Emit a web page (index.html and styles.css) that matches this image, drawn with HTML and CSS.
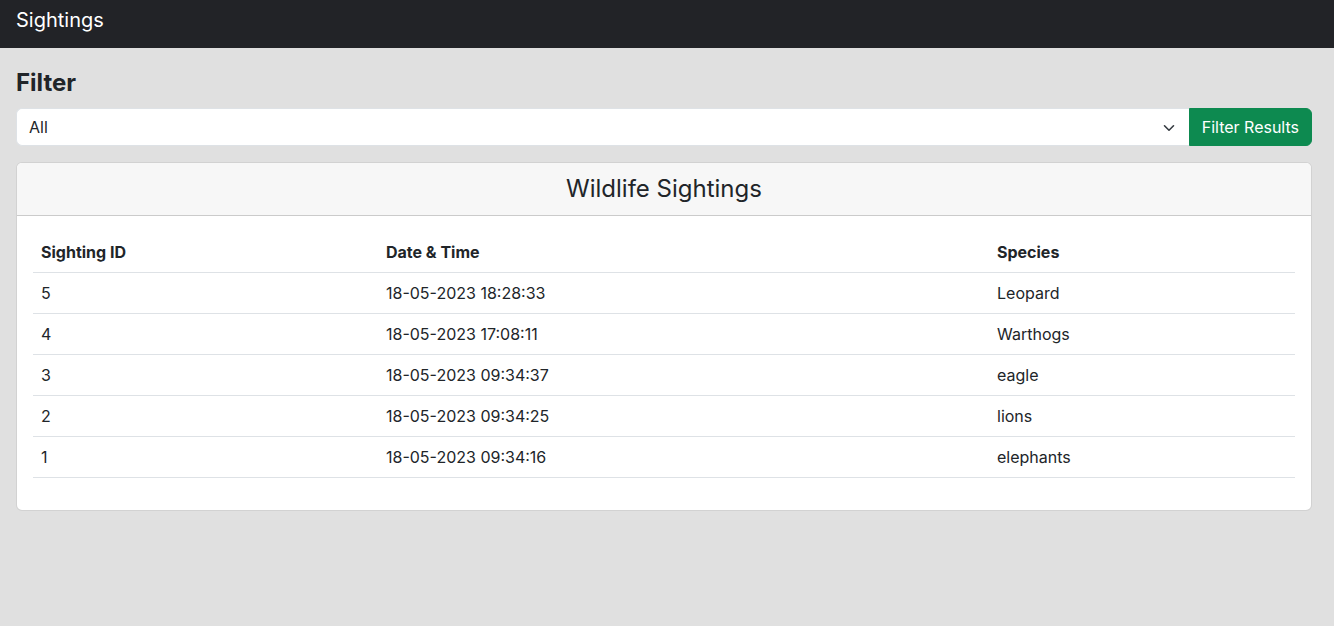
FILE: index.html
```html
<!DOCTYPE html>
<html lang="en">
<head>
<meta charset="utf-8">
<title>Sightings</title>
<link rel="stylesheet" href="styles.css">
</head>
<body>
<nav class="navbar"><span class="brand">Sightings</span></nav>
<main class="container">
  <h4 class="filter-title">Filter</h4>
  <div class="input-group">
    <div class="select">
      <span>All</span>
      <svg class="chevron" width="12" height="8" viewBox="0 0 12 8"><path fill="none" stroke="#343a40" stroke-linecap="round" stroke-linejoin="round" stroke-width="1.6" d="M1.5 1.8 6 6.2 10.5 1.8"/></svg>
    </div>
    <button class="btn-success">Filter Results</button>
  </div>
  <section class="card">
    <div class="card-header">Wildlife Sightings</div>
    <div class="card-body">
      <table class="table">
        <thead>
          <tr><th class="c1">Sighting ID</th><th class="c2">Date &amp; Time</th><th class="c3">Species</th></tr>
        </thead>
        <tbody>
          <tr><td>5</td><td>18-05-2023 18:28:33</td><td>Leopard</td></tr>
          <tr><td>4</td><td>18-05-2023 17:08:11</td><td>Warthogs</td></tr>
          <tr><td>3</td><td>18-05-2023 09:34:37</td><td>eagle</td></tr>
          <tr><td>2</td><td>18-05-2023 09:34:25</td><td>lions</td></tr>
          <tr><td>1</td><td>18-05-2023 09:34:16</td><td>elephants</td></tr>
        </tbody>
      </table>
    </div>
  </section>
</main>
</body>
</html>
```
FILE: styles.css
```css
* { box-sizing: border-box; }
html, body { margin: 0; }
body {
  font-family: Inter, "Noto Sans", "Liberation Sans", sans-serif;
  font-size: 16px;
  line-height: 1.5;
  color: #212529;
  background: #e0e0e0;
}
.navbar {
  height: 48px;
  background: #222327;
  display: flex;
  align-items: center;
  padding: 0 16px 8px;
}
.brand {
  color: #fff;
  font-size: 20px;
  line-height: 30px;
}
.container { padding: 20px 22px 20px 16px; }
.filter-title {
  margin: 0 0 11px;
  font-size: 24px;
  line-height: 29px;
  font-weight: 700;
}
.input-group {
  display: flex;
  height: 38px;
  margin-bottom: 16px;
}
.select {
  flex: 1;
  display: flex;
  align-items: center;
  justify-content: space-between;
  background: #fff;
  border: 1px solid #dee2e6;
  border-right: none;
  border-radius: 6px 0 0 6px;
  padding: 0 14px 0 12px;
}
.chevron { margin-top: 1px; }
.btn-success {
  font: inherit;
  color: #fff;
  background: #0d8a50;
  border: 1px solid #0d8a50;
  border-radius: 0 6px 6px 0;
  padding: 0 12px;
  white-space: nowrap;
  cursor: pointer;
}
.card {
  background: #fff;
  border: 1px solid rgba(0,0,0,.175);
  border-radius: 6px;
  overflow: hidden;
}
.card-header {
  background: #f7f7f7;
  border-bottom: 1px solid rgba(0,0,0,.175);
  text-align: center;
  font-size: 24px;
  line-height: 36px;
  padding: 8px 16px;
}
.card-body { padding: 16px; }
.table {
  width: 100%;
  border-collapse: collapse;
  margin-bottom: 16px;
}
.table th, .table td {
  text-align: left;
  padding: 8px;
  border-bottom: 1px solid #dee2e6;
  line-height: 24px;
}
.table th { font-weight: 700; }
.c1 { width: 345px; }
.c2 { width: 611px; }
```
